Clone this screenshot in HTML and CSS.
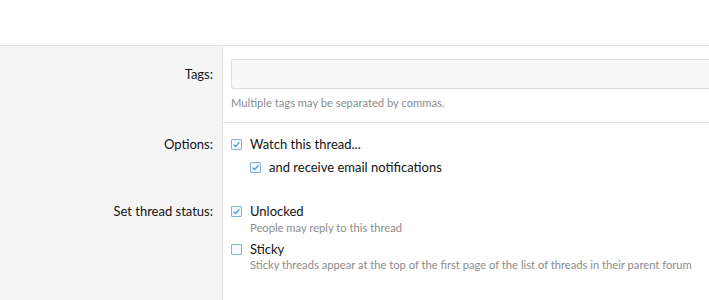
FILE: index.html
```html
<!DOCTYPE html>
<html>
<head>
<meta charset="utf-8">
<link rel="stylesheet" href="styles.css">
</head>
<body>
<div class="top"></div>
<div class="form">
  <div class="row row-tags">
    <div class="label"><span class="label-text">Tags:</span></div>
    <div class="field">
      <div class="input"></div>
      <div class="hint hint-tags">Multiple tags may be separated by commas.</div>
    </div>
  </div>
  <div class="row row-options">
    <div class="label"><span class="label-text">Options:</span></div>
    <div class="field">
      <div class="check">
        <span class="box checked"><svg viewBox="0 0 11 11" width="11" height="11"><path d="M2.6 5.6 L4.6 7.5 L8.4 3.4" fill="none" stroke="#4a9bd0" stroke-width="1.3"/></svg></span>
        <span class="check-text">Watch this thread...</span>
      </div>
      <div class="check sub">
        <span class="box checked"><svg viewBox="0 0 11 11" width="11" height="11"><path d="M2.6 5.6 L4.6 7.5 L8.4 3.4" fill="none" stroke="#4a9bd0" stroke-width="1.3"/></svg></span>
        <span class="check-text">and receive email notifications</span>
      </div>
    </div>
  </div>
  <div class="row row-status">
    <div class="label"><span class="label-text">Set thread status:</span></div>
    <div class="field">
      <div class="check">
        <span class="box checked"><svg viewBox="0 0 11 11" width="11" height="11"><path d="M2.6 5.6 L4.6 7.5 L8.4 3.4" fill="none" stroke="#4a9bd0" stroke-width="1.3"/></svg></span>
        <span class="check-text">Unlocked</span>
      </div>
      <div class="hint opt-hint">People may reply to this thread</div>
      <div class="check sticky">
        <span class="box"></span>
        <span class="check-text">Sticky</span>
      </div>
      <div class="hint opt-hint last-hint">Sticky threads appear at the top of the first page of the list of threads in their parent forum</div>
    </div>
  </div>
  <div class="row row-fill">
    <div class="label"></div>
    <div class="field"></div>
  </div>
</div>
</body>
</html>
```

FILE: styles.css
```css
html, body {
  margin: 0;
  padding: 0;
  background: #fff;
}
body {
  font-family: "Lato", "Open Sans", sans-serif;
  font-size: 13px;
  color: #141414;
  width: 709px;
  height: 300px;
  overflow: hidden;
}
.top {
  height: 45px;
  border-bottom: 1px solid #e2e2e2;
}
.form {
  display: flex;
  flex-direction: column;
  height: 254px;
}
.row {
  display: grid;
  grid-template-columns: 223px 1fr;
}
.row-fill {
  flex: 1;
}
.label {
  background: #f5f5f5;
  border-right: 1px solid #e4e4e4;
  text-align: right;
  padding-right: 9px;
  color: #141414;
  line-height: 20px;
}
.field {
  padding-left: 8px;
  min-width: 0;
  white-space: nowrap;
}
.row-tags .label {
  padding-top: 18px;
}
.row-tags .field {
  padding-top: 13px;
  padding-bottom: 12px;
  border-bottom: 1px solid #e2e2e2;
}
.input {
  height: 28px;
  border: 1px solid #dcdcdc;
  border-right: none;
  border-radius: 3px 0 0 3px;
  background: #f8f8f8;
  margin-right: -2px;
}
.hint {
  color: #8c8c8c;
  font-size: 11.2px;
  line-height: 14px;
}
.hint-tags {
  margin-top: 7px;
}
.row-options .label {
  padding-top: 11px;
}
.row-options .field {
  padding-top: 11px;
}
.check {
  display: flex;
  align-items: center;
  height: 20px;
  line-height: 20px;
}
.check.sub {
  margin-top: 3px;
  padding-left: 19px;
}
.box {
  width: 9px;
  height: 9px;
  border: 1px solid #7db5da;
  border-radius: 1px;
  background: #f2f8fc;
  margin-right: 8px;
  position: relative;
  flex: none;
}
.box svg {
  position: absolute;
  left: -1px;
  top: -1px;
}
.row-status .label {
  padding-top: 24px;
}
.row-status .field {
  padding-top: 24px;
}
.opt-hint {
  padding-left: 19px;
  margin-top: 0;
}
.check.sticky {
  margin-top: 4px;
}
.last-hint {
  margin-top: -1px;
}
```
